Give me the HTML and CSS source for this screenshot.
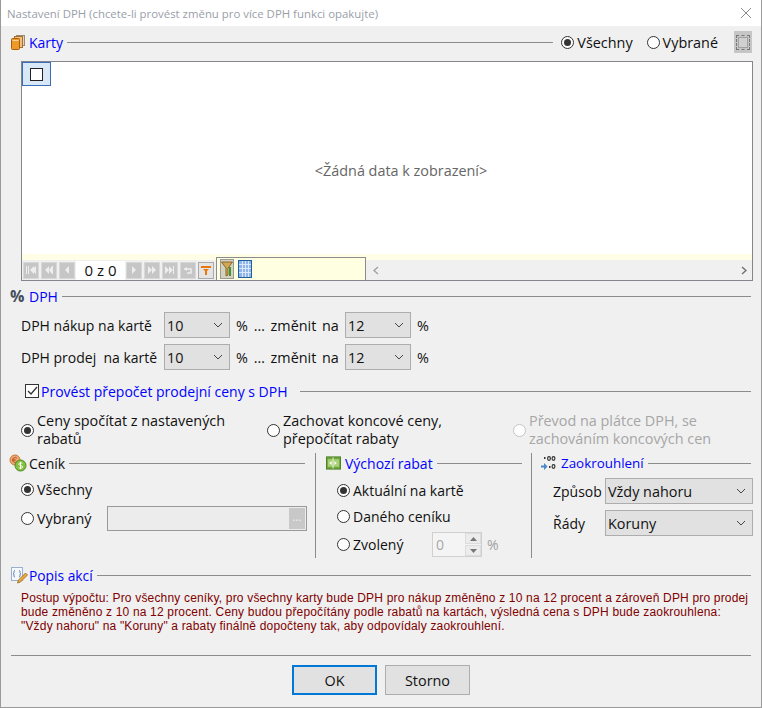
FILE: index.html
```html
<!DOCTYPE html>
<html lang="cs">
<head>
    <meta charset="UTF-8">
    <title>Nastavení DPH</title>
    <link rel="stylesheet" href="styles.css">
</head>
<body>
<div class="window">
    <div class="titlebar">
        <span class="title">Nastavení DPH (chcete-li provést změnu pro více DPH funkci opakujte)</span>
        <svg class="close" width="12" height="12" viewBox="0 0 12 12"><path d="M1 1L11 11M11 1L1 11" stroke="#8a8a8a" fill="none"/></svg>
    </div>
    <div class="content">

        <!-- Karty -->
        <div class="head head-karty">
            <svg class="icon" width="16" height="16" viewBox="0 0 16 16">
                <rect x="6.5" y="1.5" width="8" height="10" fill="#e8d8b8" stroke="#9a8a70"/>
                <rect x="4.5" y="2.5" width="8" height="11" fill="#f0c080" stroke="#a87030"/>
                <rect x="1.5" y="4.5" width="8" height="11" rx="1" fill="#ee9a28" stroke="#a8600f"/>
                <path d="M2.5 6.5h6" stroke="#fbd79a"/>
            </svg>
            <span class="label blue">Karty</span>
            <span class="rule"></span>
            <label class="radio radio-top"><span class="dot on"></span>Všechny</label>
            <label class="radio radio-top2"><span class="dot"></span>Vybrané</label>
            <span class="expand"><span class="expand-in"></span></span>
        </div>
        <div class="grid">
            <div class="grid-body">
                <div class="corner"><span class="corner-check"></span></div>
                <div class="empty">&lt;Žádná data k zobrazení&gt;</div>
            </div>
            <div class="grid-strip"></div>
            <div class="grid-bar">
                <div class="nav">
                    <span class="nbtn"><svg width="10" height="8" viewBox="0 0 10 8"><path d="M0 0h1v8H0zM2 0h1v8H2zM8 0v8L4 4zM10 0v8L6 4z" fill="#eee"/></svg></span>
                    <span class="nbtn"><svg width="10" height="8" viewBox="0 0 10 8"><path d="M5 0v8L1 4zM9 0v8H8V0z M8 0v8L5 4z" fill="#eee"/></svg></span>
                    <span class="nbtn"><svg width="6" height="8" viewBox="0 0 6 8"><path d="M5 0v8L1 4z" fill="#eee"/></svg></span>
                    <span class="pager">0 z 0</span>
                    <span class="nbtn"><svg width="6" height="8" viewBox="0 0 6 8"><path d="M1 0v8l4-4z" fill="#eee"/></svg></span>
                    <span class="nbtn"><svg width="10" height="8" viewBox="0 0 10 8"><path d="M1 0v8l4-4zM5 0v8l4-4z" fill="#eee"/></svg></span>
                    <span class="nbtn"><svg width="10" height="8" viewBox="0 0 10 8"><path d="M0 0v8l4-4zM4 0v8l4-4zM8 0h1v8H8z" fill="#eee"/></svg></span>
                    <span class="nbtn"><svg width="10" height="8" viewBox="0 0 10 8"><path d="M1 3h7v4H4" fill="none" stroke="#eee" stroke-width="1.5"/><path d="M1 3l3-2v4z" fill="#eee"/></svg></span>
                    <span class="nbtn filter"><svg width="10" height="9" viewBox="0 0 10 9"><path d="M0 0h10v2H0zM2 3h6L6 5v4H4V5z" fill="#e8780c"/></svg></span>
                </div>
                <div class="filterbar">
                    <svg class="fb-funnel" width="14" height="20" viewBox="0 0 14 20">
                        <rect x="0.5" y="0.5" width="13" height="19" fill="#d6d0c0" stroke="#999"/>
                        <path d="M1.500 3h11L8 9v7l-2 1V9z" fill="#d0a858" stroke="#8a6a28"/>
                        <path d="M10 8v9" stroke="#3a9a30" stroke-width="2"/>
                    </svg>
                    <svg class="fb-grid" width="14" height="18" viewBox="0 0 14 18">
                        <rect x="0.5" y="0.5" width="13" height="17" fill="#8fb4e8" stroke="#1f5f9f"/>
                        <path d="M4.5 1v16M7.5 1v16M10.5 1v16M1 4.5h12M1 8.5h12M1 12.5h12" stroke="#dbe8fa"/>
                    </svg>
                </div>
                <div class="hscroll">
                    <svg width="6" height="9" viewBox="0 0 6 9"><path d="M5 1L1 4.5 5 8" fill="none" stroke="#a0a0a0" stroke-width="1.4"/></svg>
                    <svg width="6" height="9" viewBox="0 0 6 9"><path d="M1 1l4 3.5L1 8" fill="none" stroke="#707070" stroke-width="1.4"/></svg>
                </div>
            </div>
        </div>

        <!-- DPH -->
        <div class="head head-dph">
            <span class="percent">%</span>
            <span class="label blue">DPH</span>
            <span class="rule"></span>
        </div>
        <div class="vat-rows">
            <div class="vat-row">
                <span class="vat-name">DPH nákup na kartě</span>
                <span class="select sel-vat">10<svg class="chev" width="10" height="6" viewBox="0 0 10 6"><path d="M1 1l4 4 4-4" fill="none" stroke="#444"/></svg></span>
                <span class="vat-mid">% … změnit na</span>
                <span class="select sel-vat">12<svg class="chev" width="10" height="6" viewBox="0 0 10 6"><path d="M1 1l4 4 4-4" fill="none" stroke="#444"/></svg></span>
                <span class="vat-pct">%</span>
            </div>
            <div class="vat-row">
                <span class="vat-name">DPH prodej&nbsp; na kartě</span>
                <span class="select sel-vat">10<svg class="chev" width="10" height="6" viewBox="0 0 10 6"><path d="M1 1l4 4 4-4" fill="none" stroke="#444"/></svg></span>
                <span class="vat-mid">% … změnit na</span>
                <span class="select sel-vat">12<svg class="chev" width="10" height="6" viewBox="0 0 10 6"><path d="M1 1l4 4 4-4" fill="none" stroke="#444"/></svg></span>
                <span class="vat-pct">%</span>
            </div>
        </div>

        <!-- Přepočet -->
        <div class="head head-calc">
            <span class="check"><svg width="11" height="10" viewBox="0 0 11 10"><path d="M1 5l3 3 6-7" fill="none" stroke="#333" stroke-width="1.3"/></svg></span>
            <span class="label blue">Provést přepočet prodejní ceny s DPH</span>
            <span class="rule"></span>
        </div>
        <div class="modes">
            <label class="radio mode mode-a"><span class="dot on"></span><span>Ceny spočítat z nastavených<br>rabatů</span></label>
            <label class="radio mode mode-b"><span class="dot"></span><span>Zachovat koncové ceny,<br>přepočítat rabaty</span></label>
            <label class="radio mode mode-c off"><span class="dot"></span><span>Převod na plátce DPH, se<br>zachováním koncových cen</span></label>
        </div>

        <!-- Tri sloupce -->
        <div class="cols">
            <div class="col col-cenik">
                <div class="head">
                    <svg class="icon" width="18" height="18" viewBox="0 0 18 18">
                        <circle cx="6" cy="6" r="5" fill="#f0a878" stroke="#c87838"/>
                        <path d="M8 4.2A2.6 2.6 0 1 0 8 7.8M3 5.3h3.6M3 6.7h3.6" fill="none" stroke="#b85a20" stroke-width=".9"/>
                        <circle cx="11.5" cy="11.5" r="5.5" fill="#84c040" stroke="#4f8a1c"/>
                        <path d="M13.4 9.4c-1-1-3.6-.8-3.6.8s3.8 1 3.8 2.7-2.8 1.700-3.900.7M11.500 7.800v7.400" fill="none" stroke="#fff" stroke-width=".9"/>
                    </svg>
                    <span class="label">Ceník</span>
                    <span class="rule"></span>
                </div>
                <label class="radio row-all"><span class="dot on"></span>Všechny</label>
                <div class="row-sel">
                    <label class="radio sel-label"><span class="dot"></span>Vybraný</label>
                    <span class="lookup"><span class="lookup-btn">…</span></span>
                </div>
            </div>
            <div class="col col-rabat">
                <div class="head">
                    <svg class="icon" width="15" height="14" viewBox="0 0 16 14">
                        <rect x="0.500" y="0.500" width="15" height="13" fill="#6fa83c" stroke="#4b7d24"/>
                        <rect x="2" y="3" width="12" height="8" fill="#a9d078"/>
                        <path d="M7.500 1v12" stroke="#e8f4d8"/>
                        <path d="M6 5L3.500 7 6 9zM9 5l2.500 2L9 9z" fill="#fff"/>
                    </svg>
                    <span class="label blue">Výchozí rabat</span>
                    <span class="rule"></span>
                </div>
                <label class="radio rab-1"><span class="dot on"></span>Aktuální na kartě</label>
                <label class="radio rab-2"><span class="dot"></span>Daného ceníku</label>
                <div class="rab-3">
                    <label class="radio rab-label"><span class="dot"></span>Zvolený</label>
                    <span class="spin">
                        <span class="spin-val">0</span>
                        <span class="spin-btns">
                            <span class="spin-btn"><svg width="7" height="4" viewBox="0 0 7 4"><path d="M3.500 0L7 4H0z" fill="#777"/></svg></span>
                            <span class="spin-btn"><svg width="7" height="4" viewBox="0 0 7 4"><path d="M3.500 4L7 0H0z" fill="#777"/></svg></span>
                        </span>
                    </span>
                    <span class="spin-pct">%</span>
                </div>
            </div>
            <div class="col col-zaokr">
                <div class="head">
                    <svg class="icon" width="15" height="14" viewBox="0 0 15 14">
                        <g fill="none" stroke="#333" stroke-width="1.200">
                            <ellipse cx="8" cy="2.500" rx="1.400" ry="1.800"/><ellipse cx="12.500" cy="2.500" rx="1.400" ry="1.800"/>
                            <ellipse cx="12.500" cy="10.500" rx="1.400" ry="1.800"/>
                        </g>
                        <path d="M3 1h1.500v2H3zM8 10h1.500v2H8z" fill="#333"/>
                        <path d="M0 9.500h3V7l3.500 3.500L3 14v-2.500H0z" fill="#4a86c8"/>
                    </svg>
                    <span class="label blue">Zaokrouhlení</span>
                    <span class="rule"></span>
                </div>
                <div class="round-row round-1">
                    <span class="round-name">Způsob</span>
                    <span class="select sel-round">Vždy nahoru<svg class="chev" width="10" height="6" viewBox="0 0 10 6"><path d="M1 1l4 4 4-4" fill="none" stroke="#444"/></svg></span>
                </div>
                <div class="round-row round-2">
                    <span class="round-name">Řády</span>
                    <span class="select sel-round">Koruny<svg class="chev" width="10" height="6" viewBox="0 0 10 6"><path d="M1 1l4 4 4-4" fill="none" stroke="#444"/></svg></span>
                </div>
            </div>
        </div>

        <!-- Popis -->
        <div class="head head-desc">
            <svg class="icon" width="17" height="17" viewBox="0 0 17 17">
                <rect x="0.500" y="0.500" width="11" height="13" fill="#f4f8ff" stroke="#9ab0d0"/>
                <path d="M4 3.500c-1 0-1 1-1 2s-1 1.200-1 1.200 1 .3 1 1.300 0 2 1 2M8 3.500c1 0 1 1 1 2s1 1.200 1 1.200-1 .3-1 1.300 0 2-1 2" fill="none" stroke="#3a5a90" stroke-width=".8"/>
                <path d="M14.500 6l2 2-7 7-3 1 1-3z" fill="#e8a83c" stroke="#9a6a20" stroke-width=".8"/>
            </svg>
            <span class="label blue">Popis akcí</span>
            <span class="rule"></span>
        </div>
        <p class="desc">Postup výpočtu: Pro všechny ceníky, pro všechny karty bude DPH pro nákup změněno z 10 na 12 procent a zároveň DPH pro prodej<br>bude změněno z 10 na 12 procent. Ceny budou přepočítány podle rabatů na kartách, výsledná cena s DPH bude zaokrouhlena:<br>"Vždy nahoru" na "Koruny" a rabaty finálně dopočteny tak, aby odpovídaly zaokrouhlení.</p>

        <div class="footer">
            <button class="btn btn-ok" type="button">OK</button>
            <button class="btn" type="button">Storno</button>
        </div>
    </div>
</div>
</body>
</html>
```

FILE: styles.css
```css
/* Dialog look, Windows style */
html, body {
    margin: 0;
    padding: 0;
    height: 708px;
    overflow: hidden;
}

body {
    background-color: #9a9a9a;
    font-family: 'Open Sans', 'Noto Sans', sans-serif;
    font-size: 14.4px;
    color: #111;
}

.window {
    width: 760px;
    height: 707px;
    margin-left: 1px;
    background-color: #f0f0f0;
}

.titlebar {
    height: 26px;
    background-color: #fff;
    display: flex;
    align-items: center;
    justify-content: space-between;
    padding: 0 9px 0 6px;
}

.title {
    font-size: 11.4px;
    color: #99a0a8;
}

.content {
    padding: 0 10px 0 8px;
}

/* section heading with line */
.head {
    display: flex;
    align-items: center;
    height: 20px;
}

.icon {
    flex: none;
    margin-right: 4px;
}

.label {
    white-space: nowrap;
    font-size: 14px;
}

.blue {
    color: #0000ff;
}

.rule {
    flex: 1;
    height: 1px;
    margin-left: 4px;
    background-color: #8c8c8c;
}

.head-karty {
    margin: 6px 0 0 0;
    padding-left: 1px;
    height: 20px;
}

.head-karty .icon {
    margin-right: 3px;
}

.radio {
    display: flex;
    align-items: center;
    white-space: nowrap;
}

.dot {
    flex: none;
    width: 11px;
    height: 11px;
    border: 1px solid #333;
    border-radius: 50%;
    background-color: #fff;
    margin-right: 3px;
    position: relative;
}

.dot.on::after {
    content: "";
    position: absolute;
    left: 2px;
    top: 2px;
    width: 7px;
    height: 7px;
    border-radius: 50%;
    background-color: #333;
}

.radio-top {
    margin-left: 8px;
}

.radio-top2 {
    margin-left: 14px;
}

.expand {
    flex: none;
    width: 18px;
    height: 22px;
    margin-left: 16px;
    margin-right: -1px;
    background-color: #c6c6c6;
    display: flex;
    align-items: center;
    justify-content: center;
}

.expand-in {
    width: 12px;
    height: 13px;
    border: 1px dashed #777;
    display: flex;
    align-items: center;
    justify-content: center;
}

.expand-in::after {
    content: "";
    width: 8px;
    height: 9px;
    border: 1px solid #a0a0a0;
    background-color: #d0d0d0;
}

/* grid */
.grid {
    margin: 9px 0 0 12px;
    width: 730px;
    border: 1px solid #85858f;
    background-color: #f0f0f0;
}

.grid-body {
    height: 192px;
    background-color: #fff;
    display: flex;
    flex-direction: column;
}

.corner {
    width: 27px;
    height: 22px;
    border: 1px solid #3a6fb8;
    background-color: #d9e8f6;
    display: flex;
    align-items: center;
    justify-content: center;
}

.corner-check {
    width: 11px;
    height: 11px;
    border: 1px solid #222;
    background-color: #fff;
}

.empty {
    flex: 1;
    display: flex;
    align-items: center;
    justify-content: center;
    color: #666;
    padding-left: 28px;
}

.grid-strip {
    height: 6px;
    background-color: #fffde6;
}

.grid-bar {
    height: 20px;
    display: flex;
    align-items: stretch;
}

.nav {
    display: flex;
    align-items: center;
    gap: 2px;
    flex: none;
    padding-left: 1px;
    width: 194px;
    box-sizing: border-box;
}

.nbtn {
    width: 16px;
    height: 17px;
    background-color: #c6c6c6;
    border: 1px solid #d8d8d8;
    box-sizing: border-box;
    display: flex;
    align-items: center;
    justify-content: center;
}

.nbtn.filter {
    background-color: #e4e4e4;
    border-color: #aaa;
}

.pager {
    width: 49px;
    height: 19px;
    background-color: #fff;
    text-align: center;
    line-height: 19px;
    font-size: 15px;
    margin: 0 -1px;
}

.filterbar {
    flex: none;
    width: 145px;
    margin-top: -3px;
    border: 1px solid #8c8c8c;
    border-bottom: 0;
    background-color: #ffffe1;
    display: flex;
    align-items: center;
    gap: 4px;
    padding-left: 3px;
}

.hscroll {
    flex: 1;
    display: flex;
    align-items: center;
    justify-content: space-between;
    padding: 0 5px 0 7px;
}

/* DPH */
.head-dph {
    margin-top: 5px;
    padding-left: 1px;
}

.percent {
    width: 19px;
    font-weight: 700;
    font-size: 16px;
    color: #444c5c;
}

.vat-rows {
    margin-top: 6px;
    padding-left: 12px;
    display: flex;
    flex-direction: column;
    gap: 6px;
}

.vat-row {
    display: flex;
    align-items: center;
    height: 26px;
}

.vat-name {
    width: 143px;
    white-space: nowrap;
    font-size: 14px;
}

.vat-mid {
    width: 109px;
    margin-left: 6px;
    white-space: nowrap;
    word-spacing: 2px;
}

.vat-pct {
    margin-left: 6px;
}

.select {
    box-sizing: border-box;
    height: 26px;
    border: 1px solid #adadad;
    background-color: #e1e1e1;
    display: flex;
    align-items: center;
    justify-content: space-between;
    padding: 0 6px 0 2px;
    flex: none;
}

.sel-vat {
    width: 66px;
}

.chev {
    flex: none;
}

/* prepocet */
.head-calc {
    margin-top: 11px;
    padding-left: 16px;
}

.head-calc .rule {
    margin-left: 12px;
}

.check {
    width: 12px;
    height: 12px;
    border: 1px solid #333;
    background-color: #fff;
    display: flex;
    align-items: center;
    justify-content: center;
    margin-right: 2px;
}

.modes {
    margin-top: 11px;
    padding-left: 12px;
    display: flex;
    height: 36px;
}

.mode {
    line-height: 18px;
    flex: none;
}

.mode-a {
    width: 246px;
}

.mode-b {
    width: 246px;
}

.off {
    color: #a6a6a6;
}

.off .dot {
    border-color: #c4c4c4;
}

/* columns */
.cols {
    margin-top: 5px;
    display: grid;
    grid-template-columns: 306px 216px 222px;
    height: 105px;
}

.col {
    box-sizing: border-box;
}

.col-cenik .icon {
    margin-right: 2px;
}

.col-cenik .rule {
    margin-right: 10px;
}

.row-all {
    margin: 7px 0 0 12px;
}

.row-sel {
    margin: 7px 0 0 12px;
    display: flex;
    align-items: center;
}

.sel-label {
    width: 86px;
}

.lookup {
    box-sizing: border-box;
    width: 200px;
    height: 25px;
    border: 1px solid #999;
    background-color: #ececec;
    display: flex;
    justify-content: flex-end;
    padding: 1px;
}

.lookup-btn {
    width: 16px;
    background-color: #c8c8c8;
    color: #eee;
    text-align: center;
    font-size: 12px;
}

.col-rabat {
    border-left: 1px solid #8c8c8c;
    padding-left: 10px;
}

.col-rabat .rule {
    margin-right: 9px;
}

.rab-1, .rab-2, .rab-3 {
    font-size: 14px;
}

.rab-1 {
    margin: 8px 0 0 11px;
}

.rab-2 {
    margin: 7px 0 0 11px;
}

.rab-3 {
    margin: 6px 0 0 11px;
    display: flex;
    align-items: center;
}

.rab-label {
    width: 95px;
}

.spin {
    box-sizing: border-box;
    width: 50px;
    height: 25px;
    border: 1px solid #d0d0d0;
    background-color: #f4f4f4;
    display: flex;
    justify-content: space-between;
    color: #a8a8a8;
}

.spin-val {
    padding-left: 3px;
    line-height: 23px;
}

.spin-btns {
    display: flex;
    flex-direction: column;
    gap: 1px;
    width: 16px;
}

.spin-btn {
    flex: 1;
    background-color: #ececec;
    border: 1px solid #dcdcdc;
    display: flex;
    align-items: center;
    justify-content: center;
}

.spin-pct {
    margin-left: 5px;
    color: #a0a0a0;
}

.col-zaokr {
    border-left: 1px solid #8c8c8c;
    padding-left: 9px;
}

.col-zaokr .head {
    width: 210px;
}

.col-zaokr .icon {
    margin-right: 5px;
}

.col-zaokr .label {
    font-size: 13.4px;
}

.round-row {
    display: flex;
    align-items: center;
    padding-left: 12px;
}

.round-1 {
    margin-top: 5px;
}

.round-2 {
    margin-top: 6px;
}

.round-name {
    width: 52px;
    white-space: nowrap;
    font-size: 14px;
}

.sel-round {
    width: 148px;
}

/* popis */
.head-desc {
    margin-top: 7px;
    padding-left: 2px;
}

.head-desc .icon {
    margin-right: 1px;
}

.head-desc .label {
    font-size: 13.8px;
}

.desc {
    margin: 6px 0 0 12px;
    font-family: 'Liberation Sans', sans-serif;
    font-size: 12px;
    letter-spacing: 0.175px;
    line-height: 14px;
    color: #800000;
    white-space: nowrap;
}

.footer {
    margin-top: 22px;
    padding-top: 9px;
    margin-left: 2px;
    border-top: 1px solid #8c8c8c;
    display: flex;
    justify-content: center;
    gap: 8px;
}

.btn {
    box-sizing: border-box;
    width: 85px;
    height: 30px;
    border: 1px solid #adadad;
    background-color: #e1e1e1;
    font-family: inherit;
    font-size: 14.4px;
    color: #111;
    padding: 0;
}

.btn-ok {
    border: 2px solid #0078d7;
}
```
